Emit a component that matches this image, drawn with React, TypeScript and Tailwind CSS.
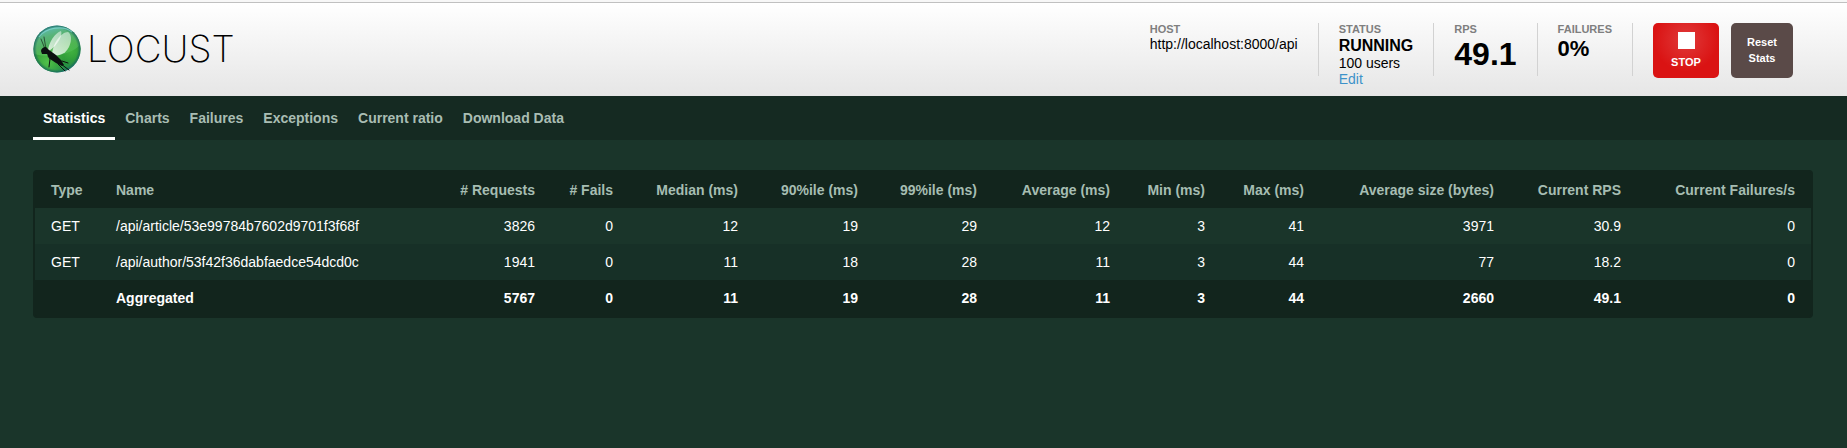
import React from "react";

const tabs = ["Statistics", "Charts", "Failures", "Exceptions", "Current ratio", "Download Data"];

const columns = [
  { label: "Type", width: "w-[65px]" },
  { label: "Name", width: "w-[351px]" },
  { label: "# Requests", width: "w-[100px]" },
  { label: "# Fails", width: "w-[78px]" },
  { label: "Median (ms)", width: "w-[125px]" },
  { label: "90%ile (ms)", width: "w-[120px]" },
  { label: "99%ile (ms)", width: "w-[119px]" },
  { label: "Average (ms)", width: "w-[133px]" },
  { label: "Min (ms)", width: "w-[95px]" },
  { label: "Max (ms)", width: "w-[99px]" },
  { label: "Average size (bytes)", width: "w-[190px]" },
  { label: "Current RPS", width: "w-[127px]" },
  { label: "Current Failures/s", width: "w-[174px]" },
];

const rows = [
  ["GET", "/api/article/53e99784b7602d9701f3f68f", "3826", "0", "12", "19", "29", "12", "3", "41", "3971", "30.9", "0"],
  ["GET", "/api/author/53f42f36dabfaedce54dcd0c", "1941", "0", "11", "18", "28", "11", "3", "44", "77", "18.2", "0"],
];

const total = ["", "Aggregated", "5767", "0", "11", "19", "28", "11", "3", "44", "2660", "49.1", "0"];

function cellClass(i: number) {
  return i < 2 ? "h-9 whitespace-nowrap pl-4 text-left" : "h-9 whitespace-nowrap pr-4 text-right";
}

function LogoMark() {
  return (
    <svg viewBox="0 0 48 48" className="size-12" aria-hidden="true">
      <defs>
        <linearGradient id="ball" x1="0.3" y1="0" x2="0.6" y2="1">
          <stop offset="0" stopColor="#5fbcba" />
          <stop offset="0.22" stopColor="#58b378" />
          <stop offset="0.5" stopColor="#4fb055" />
          <stop offset="0.8" stopColor="#3aa655" />
          <stop offset="1" stopColor="#3a9a90" />
        </linearGradient>
        <radialGradient id="glow" cx="0.3" cy="0.78" r="0.36">
          <stop offset="0" stopColor="#5ccc50" stopOpacity="0.8" />
          <stop offset="1" stopColor="#5ccc50" stopOpacity="0" />
        </radialGradient>
        <radialGradient id="glow2" cx="0.8" cy="0.55" r="0.3">
          <stop offset="0" stopColor="#4fc446" stopOpacity="0.6" />
          <stop offset="1" stopColor="#4fc446" stopOpacity="0" />
        </radialGradient>
        <radialGradient id="rim" cx="0.5" cy="0.5" r="0.5">
          <stop offset="0.86" stopColor="#14605c" stopOpacity="0" />
          <stop offset="1" stopColor="#14605c" stopOpacity="0.8" />
        </radialGradient>
        <linearGradient id="wing" x1="0.8" y1="0" x2="0.2" y2="1">
          <stop offset="0" stopColor="#fff" stopOpacity="0.5" />
          <stop offset="1" stopColor="#fff" stopOpacity="0.75" />
        </linearGradient>
      </defs>
      <circle cx="24" cy="24" r="23.6" fill="url(#ball)" />
      <path d="M1 29C16 33 36 31 47 20C49 34 38 47 24 47C12 47 3 39 1 29Z" fill="#128018" opacity="0.5" />
      <circle cx="24" cy="24" r="23.6" fill="url(#glow)" />
      <circle cx="24" cy="24" r="23.6" fill="url(#glow2)" />
      <circle cx="24" cy="24" r="23.6" fill="url(#rim)" />
      <path d="M6 12C13 2 31 0 39 7" fill="none" stroke="#8fe5e5" strokeWidth="1.2" opacity="0.6" />
      <path d="M15 25C16 17 22 8 28 6C30 10 25 20 16 26Z" fill="url(#wing)" />
      <path d="M19 29C20 18 28 7 35 7C41 11 37 24 31 28C26 31 22 31 19 29Z" fill="url(#wing)" />
      <path d="M8 26C8 24 10 22 13 22L16 25L23 30L28 35L31 40L29 41L23 38L17 34L14 29L11 29L9 29Z" fill="#0b1010" />
      <g fill="none" stroke="#0b1010" strokeLinecap="round">
        <path d="M12 24L8 14M13 24L11 12" strokeWidth="0.6" />
        <path d="M15 31L17 34L16 42" strokeWidth="1" />
        <path d="M25 39L32 46M28 39L36 45M29 36L35 38" strokeWidth="1" />
      </g>
    </svg>
  );
}

function Stat({ label, children }: { label: string; children: React.ReactNode }) {
  return (
    <div className="h-[53px] border-r border-[#d2d2d2] px-5">
      <div className="text-[11px] leading-3 font-bold text-[#7f7f7f]">{label}</div>
      {children}
    </div>
  );
}

export default function App() {
  return (
    <div className="min-h-screen bg-[#1a352a] font-['Liberation_Sans',Arial,sans-serif] text-sm">
      <div className="h-[3px] border-b border-[#c0c0c0] bg-[#f7f7f7]" />
      <header className="flex h-[93px] items-start justify-between bg-linear-to-b from-white to-[#e6e6e6] pt-5 pr-[54px] pl-[33px]">
        <a href="#" className="mt-[2px] flex items-center gap-[6px] text-black">
          <LogoMark />
          <span className="font-['Inter',sans-serif] text-[37px] leading-[48px] font-extralight">LOCUST</span>
        </a>
        <div className="flex">
          <Stat label="HOST">
            <div className="leading-[18px]">http://localhost:8000/api</div>
          </Stat>
          <Stat label="STATUS">
            <div className="pt-px text-base leading-[19px] font-bold">RUNNING</div>
            <div className="leading-4">100 users</div>
            <a href="#" className="block leading-4 text-[#3d92c9]">Edit</a>
          </Stat>
          <Stat label="RPS">
            <div className="text-[32px] leading-[38px] font-bold">49.1</div>
          </Stat>
          <Stat label="FAILURES">
            <div className="text-[22px] leading-7 font-bold">0%</div>
          </Stat>
          <button className="ml-5 flex h-[55px] w-[66px] flex-col items-center gap-[5px] rounded-[5px] bg-[radial-gradient(circle_at_50%_30%,#e03a3a_0,#da1313_32px)] pt-[9px] text-[11px] leading-4 font-bold text-white">
            <span className="size-[17px] bg-white" />
            STOP
          </button>
          <button className="ml-3 flex h-[55px] w-[62px] items-start rounded-[5px] bg-[#5a4a48] px-3 pt-[11px] text-center text-[11px] leading-4 font-bold text-white">
            Reset Stats
          </button>
        </div>
      </header>
      <nav className="flex h-11 bg-[#152a22] px-[33px]">
        {tabs.map((tab, i) => (
          <a
            key={tab}
            href="#"
            className={
              i === 0
                ? "border-b-[3px] border-white px-[10px] leading-[44px] font-bold text-white"
                : "px-[10px] leading-[44px] font-bold text-[#a9bdb3]"
            }
          >
            {tab}
          </a>
        ))}
      </nav>
      <main className="pt-[30px] pr-[34px] pl-[33px]">
        <div className="rounded border-2 border-[#12251d] bg-[#12251d]">
          <table className="w-full table-fixed border-collapse text-white">
            <thead>
              <tr className="text-[#a6bdb2]">
                {columns.map((c, i) => (
                  <th key={c.label} scope="col" className={`${c.width} ${cellClass(i)}`}>
                    {c.label}
                  </th>
                ))}
              </tr>
            </thead>
            <tbody>
              {rows.map((row, r) => (
                <tr key={row[1]} className={r % 2 ? "bg-[#173027]" : "bg-[#1a352a]"}>
                  {row.map((v, i) => (
                    <td key={i} className={cellClass(i)}>{v}</td>
                  ))}
                </tr>
              ))}
            </tbody>
            <tfoot>
              <tr className="font-bold">
                {total.map((v, i) => (
                  <td key={i} className={cellClass(i)}>{v}</td>
                ))}
              </tr>
            </tfoot>
          </table>
        </div>
      </main>
    </div>
  );
}
